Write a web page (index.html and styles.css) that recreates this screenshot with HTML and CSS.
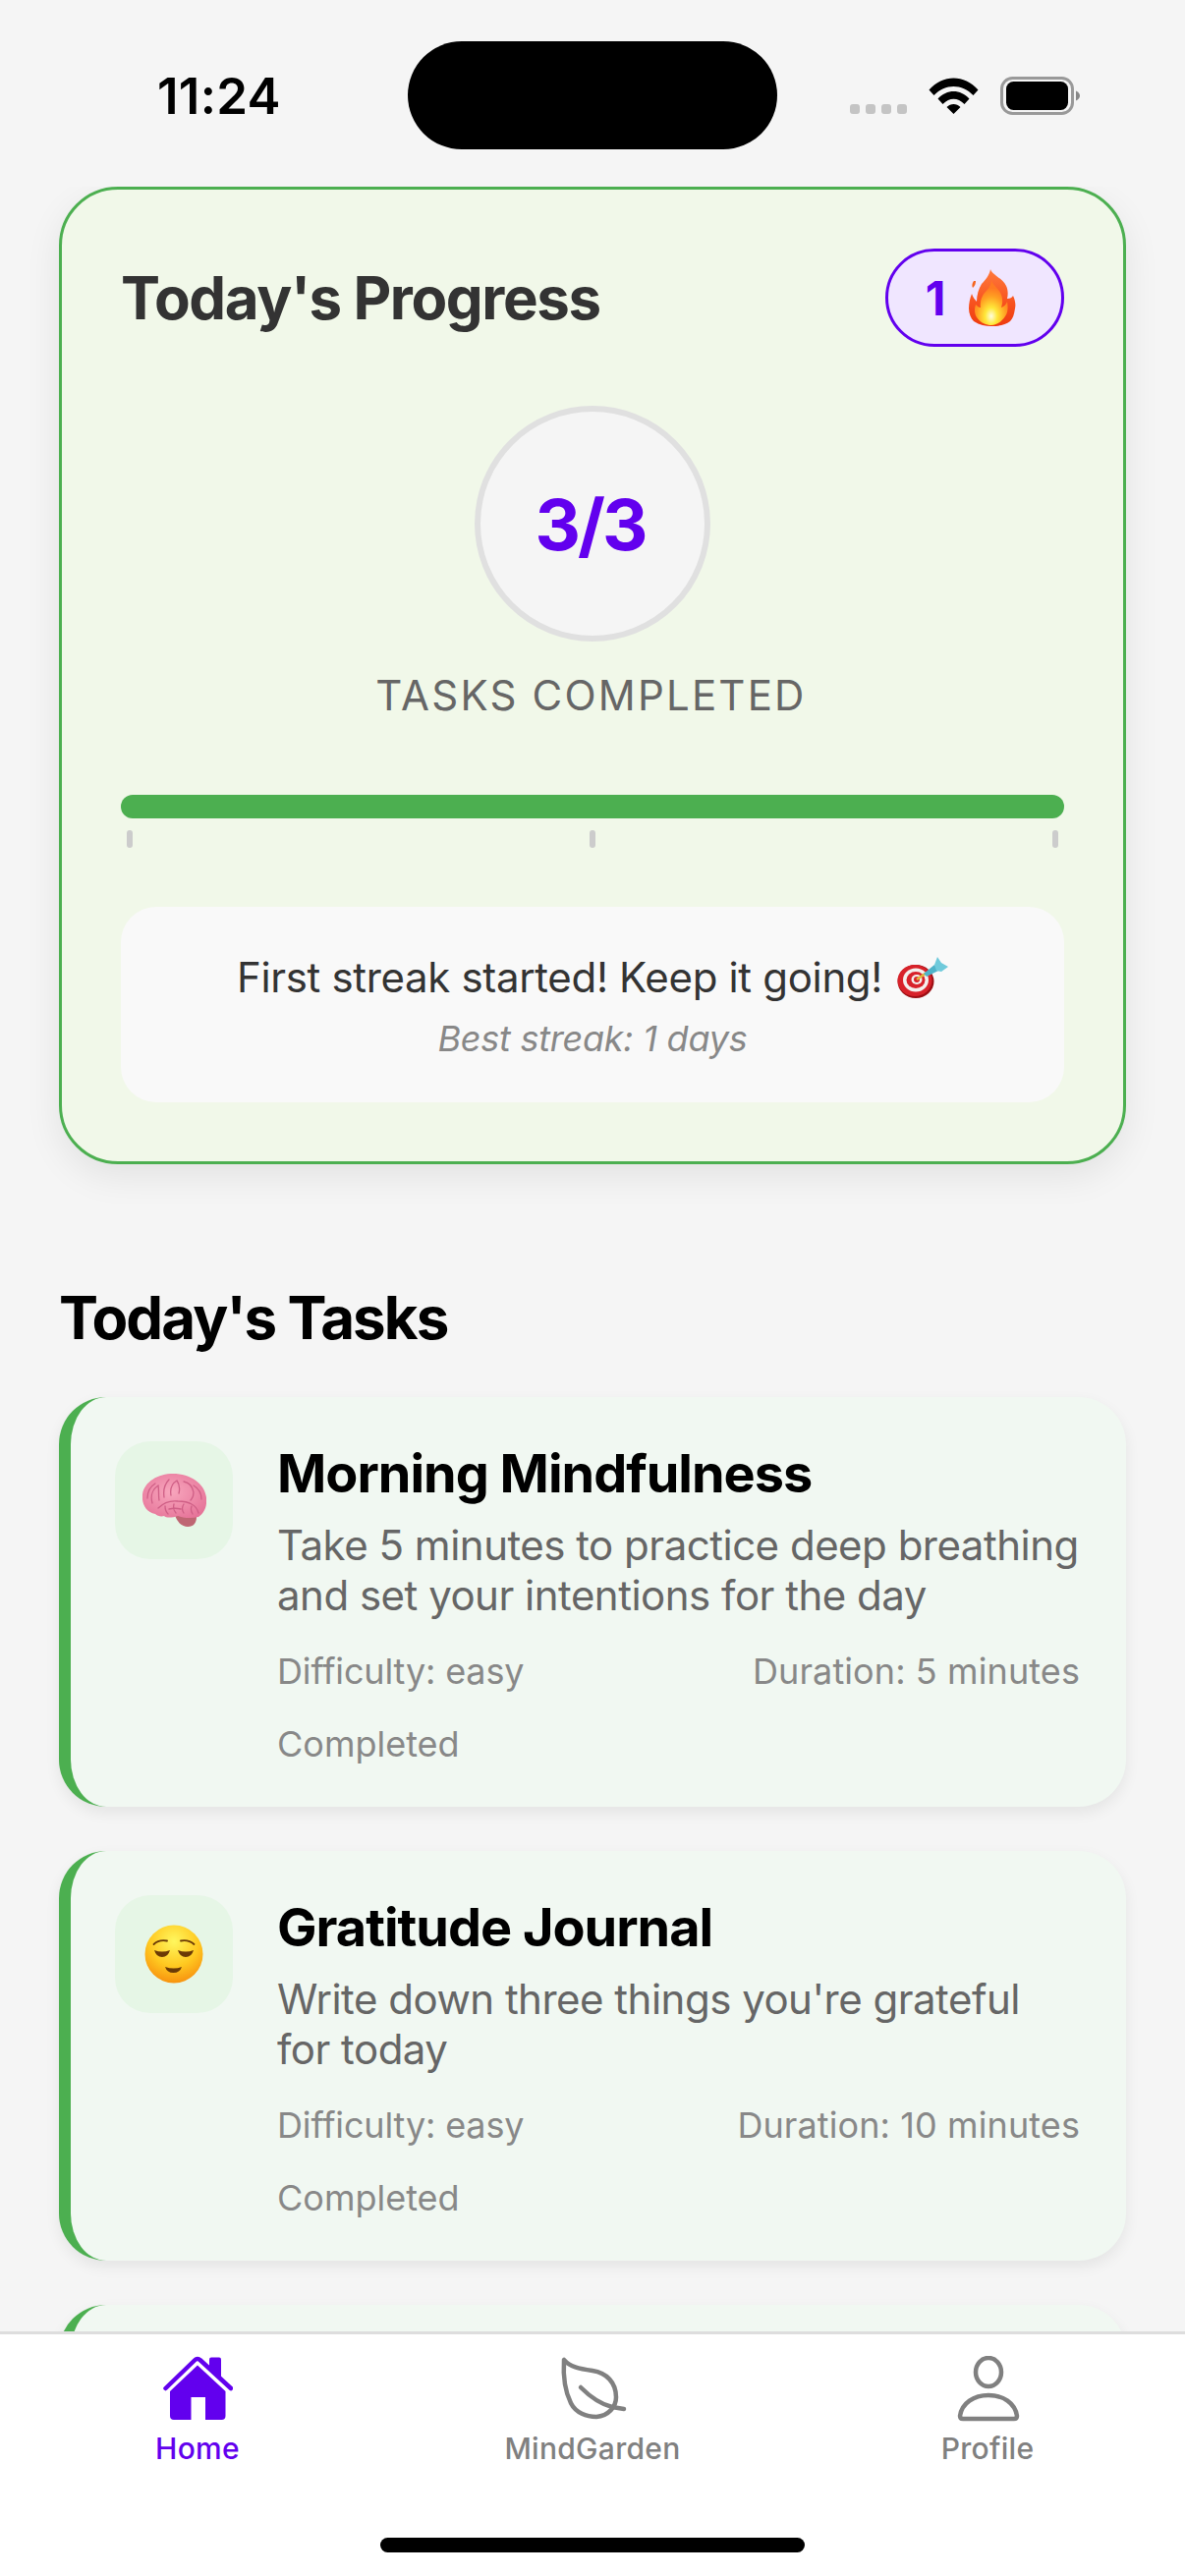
FILE: index.html
```html
<!DOCTYPE html>
<html lang="en">
<head>
<meta charset="utf-8">
<title>Home</title>
<link rel="stylesheet" href="styles.css">
</head>
<body>
<svg class="defs" width="0" height="0" aria-hidden="true">
  <defs>
    <radialGradient id="fireCore" cx="0.5" cy="0.8" r="0.62">
      <stop offset="0" stop-color="#fffde0"/>
      <stop offset="0.3" stop-color="#ffe83a"/>
      <stop offset="0.7" stop-color="#ffa022"/>
      <stop offset="1" stop-color="#ff7a22"/>
    </radialGradient>
    <linearGradient id="fireOuter" x1="0" y1="0" x2="0" y2="1">
      <stop offset="0" stop-color="#ff7a3c"/>
      <stop offset="0.6" stop-color="#f7521e"/>
      <stop offset="1" stop-color="#ee3a10"/>
    </linearGradient>
    <radialGradient id="faceGrad" cx="0.5" cy="0.28" r="0.78">
      <stop offset="0" stop-color="#fff75e"/>
      <stop offset="0.55" stop-color="#ffc820"/>
      <stop offset="0.92" stop-color="#f8930f"/>
      <stop offset="1" stop-color="#d9800f"/>
    </radialGradient>
    <radialGradient id="brainGrad" cx="0.45" cy="0.42" r="0.72">
      <stop offset="0" stop-color="#f8a6bd"/>
      <stop offset="1" stop-color="#e46f95"/>
    </radialGradient>
    <symbol id="face" viewBox="0 0 60 60">
      <circle cx="30" cy="30" r="29.500" fill="url(#faceGrad)"/>
      <path d="M9.500 20q5-5 13.500-3.500M37 16.500q8-1.500 13.500 3.500" fill="none" stroke="#6b3a06" stroke-width="1.800" stroke-linecap="round"/>
      <path d="M10 26q8 3 16 0q-2 7-8 7t-8-7zM34 26q8 3 16 0q-2 7-8 7t-8-7z" fill="#6b3a06"/>
      <path d="M21 43q9 3 17 0q-2 6-8.500 6T21 43z" fill="#6b3a06"/>
    </symbol>
  </defs>
</svg>
<div class="app">
  <header class="status">
    <span class="clock">11:24</span>
    <div class="island"></div>
    <div class="status-icons">
      <div class="dots"><i></i><i></i><i></i><i></i></div>
      <svg class="wifi" viewBox="0 0 50 37" width="51" height="37"><path d="M0 12.500C14-3.500 36-3.500 50 12.500L45 18C33.500 6 16.500 6 5 18z M9 21.500C18 11.500 32 11.500 41 21.500L36 27C29 20 21 20 14 27z M18 30C22 26 28 26 32 30L25 37z" fill="#000"/></svg>
      <svg class="battery" viewBox="0 0 82 39" width="82" height="39"><rect x="1.500" y="1.500" width="72" height="36" rx="11" fill="none" stroke="#999" stroke-width="3"/><rect x="6" y="5" width="63" height="29" rx="7.500" fill="#000"/><path d="M77 14.500q4 2 4 5t-4 5z" fill="#888"/></svg>
    </div>
  </header>

  <main class="scroll">
    <section class="progress-card">
      <div class="progress-head">
        <h2 class="progress-title">Today's Progress</h2>
        <div class="streak"><span>1</span>
          <svg class="fire" viewBox="0 0 48 58" width="48" height="58"><path d="M22 0c2 6 12 9 16 17 2 4 2 9 1 13 3 0 5-1 6-3 2 4 3 9 2 13-1 6-2 10-5 13-5 4-13 5-19 5s-12-1-18-5C2 50 0 45 0 40c0-5 1-10 3-15 1 3 3 6 5 8 0-7 2-13 5-18 4-4 8-9 9-15z" fill="url(#fireOuter)"/><path d="M5 12c-2 3-2 5-1 7 2-2 3-4 3-7z" fill="#f5651f"/><path d="M23 11c1 5 8 9 10 15 2 6 1 10 0 13 3-1 5-3 6-6 1 5 1 11-2 15-4 6-9 9-14 9s-11-2-15-8c-3-5-2-10-1-13 2 2 3 3 5 3-1-6 1-11 4-15 4-4 7-8 7-13z" fill="url(#fireCore)"/></svg>
        </div>
      </div>
      <div class="counter"><div class="ring">3/3</div></div>
      <p class="counter-label">TASKS COMPLETED</p>
      <div class="bar"><div class="bar-fill"></div></div>
      <div class="ticks"><i></i><i></i><i></i></div>
      <div class="message">
        <p class="message-main">First streak started! Keep it going!
          <svg class="dart" viewBox="0 0 52 42" width="52" height="42"><ellipse cx="19" cy="25" rx="18.500" ry="17" fill="#9c0f14"/><ellipse cx="18" cy="24" rx="17.500" ry="16" fill="#d8222a"/><ellipse cx="19" cy="23.500" rx="13" ry="12" fill="#f4f1ee"/><ellipse cx="19" cy="23.500" rx="9.500" ry="8.500" fill="#d8222a"/><ellipse cx="20" cy="23" rx="5.500" ry="5" fill="#f4f1ee"/><circle cx="20" cy="23" r="3" fill="#d8222a"/><path d="M20 23L30 16" stroke="#e0b83a" stroke-width="2.500"/><path d="M27 17L38 8l4 6-12 6z" fill="#4fb3c9"/><path d="M38 8l3-8 4 6 7 4-7 5-5-1z" fill="#6fcadb"/></svg>
        </p>
        <p class="message-sub">Best streak: 1 days</p>
      </div>
    </section>

    <h2 class="section-title">Today's Tasks</h2>

    <article class="task">
      <div class="task-icon">
        <svg class="brain" viewBox="0 0 65 54" width="65" height="54"><path d="M33 42c2 7 7 12 13 12 6 0 9-4 9-10z" fill="#bf6673"/><path d="M13 41C3 39-1 30 0 21 2 8 16 0 31 0c18 0 32 10 34 24 1 9-2 16-8 20-8 2-16 1-21-1-6 2-12 2-14 0-3 1-7 0-9-2z" fill="url(#brainGrad)"/><path d="M5 25c0-7 3-12 8-15M10 30c-2-7 0-14 6-18 1 5 0 10 1 15M22 24c-1-7 0-13 5-18M29 22c-1-6 1-12 6-15 3 4 3 9 2 13M42 8c5 1 9 5 10 11 0 3-1 6-3 8M52 12c5 3 8 8 8 14M16 35c5-5 12-8 20-7 5 0 9 0 14 3 4 2 6 5 7 9M23 33c0 3 1 6 3 8M32 31c-1 4 0 7 2 9M42 31c-2 3-2 6 0 9M50 33c-1 3-1 5 1 8M27 36c4-1 8-1 12 0" fill="none" stroke="#cf5f86" stroke-width="1.300" stroke-linecap="round"/></svg>
      </div>
      <div class="task-body">
        <h3 class="task-title">Morning Mindfulness</h3>
        <p class="task-desc">Take 5 minutes to practice deep breathing and set your intentions for the day</p>
        <div class="task-meta"><span>Difficulty: easy</span><span>Duration: 5 minutes</span></div>
        <p class="task-state">Completed</p>
      </div>
    </article>

    <article class="task">
      <div class="task-icon">
        <svg class="face" width="60" height="60"><use href="#face"/></svg>
      </div>
      <div class="task-body">
        <h3 class="task-title">Gratitude Journal</h3>
        <p class="task-desc">Write down three things you're grateful for today</p>
        <div class="task-meta"><span>Difficulty: easy</span><span>Duration: 10 minutes</span></div>
        <p class="task-state">Completed</p>
      </div>
    </article>

    <article class="task"></article>
  </main>

  <nav class="tabbar">
    <div class="tab tab-active">
      <svg viewBox="0 0 72 68" width="72" height="68"><path d="M3.500 33L33.500 4a3.500 3.500 0 0 1 5 0L70 33" fill="none" stroke="#6200ee" stroke-width="4.500" stroke-linecap="round" stroke-linejoin="round"/><path d="M48 13V3.500a2 2 0 0 1 2-2h8a2 2 0 0 1 2 2V24z" fill="#6200ee"/><path d="M36 9.500L64.500 36V61a4 4 0 0 1-4 4H44V42H29.500V65H12a4 4 0 0 1-4-4V36z" fill="#6200ee"/></svg>
      <span>Home</span>
    </div>
    <div class="tab">
      <svg viewBox="0 0 72 68" width="72" height="68"><path d="M7 4C6 20 8 36 14 48C19 58 30 62 40 62C52 61 60 52 60 42C60 27 50 17 36 15C22 13 13 11 7 4z" fill="none" stroke="#808080" stroke-width="4.500" stroke-linejoin="round"/><path d="M24 32c9 9 20 17 32 20l12 2" fill="none" stroke="#808080" stroke-width="4.500" stroke-linecap="round"/></svg>
      <span>MindGarden</span>
    </div>
    <div class="tab">
      <svg viewBox="0 0 72 68" width="72" height="68"><ellipse cx="37" cy="16.500" rx="13" ry="14.500" fill="none" stroke="#808080" stroke-width="4.500"/><path d="M11 64c-2 0-3-1-3-3 2-13 14-21 29-21s27 8 29 21c0 2-1 3-3 3z" fill="none" stroke="#808080" stroke-width="4.500" stroke-linejoin="round"/></svg>
      <span>Profile</span>
    </div>
    <div class="home-bar"></div>
  </nav>
</div>
</body>
</html>
```

FILE: styles.css
```css
* { box-sizing: border-box; }
html, body { margin: 0; padding: 0; }
body { font-family: Inter, "Noto Sans", sans-serif; background: #f5f5f5; }
p, h2, h3 { margin: 0; }
.defs { position: absolute; }

.app { width: 1206px; height: 2622px; display: flex; flex-direction: column; overflow: hidden; background: #f5f5f5; }

.status { flex: none; height: 190px; position: relative; }
.clock { position: absolute; left: 160px; top: 67px; font-size: 51px; line-height: 62px; font-weight: 600; letter-spacing: 0.3px; color: #000; }
.island { position: absolute; left: 415px; top: 42px; width: 376px; height: 110px; border-radius: 55px; background: #000; }
.status-icons { position: absolute; left: 865px; top: 78px; display: flex; align-items: flex-end; }
.dots { display: flex; gap: 6px; margin-bottom: 1px; }
.dots i { width: 10px; height: 10px; border-radius: 3px; background: #c4c4c4; }
.wifi { margin-left: 22px; margin-bottom: 1px; }
.battery { margin-left: 22px; }

.scroll { flex: 1; min-height: 0; overflow: hidden; padding: 0 60px; }

.progress-card { height: 995px; border: 3px solid #4caf50; border-radius: 60px; background: #f1f8e9; padding: 60px; box-shadow: 0 12px 36px rgba(0, 0, 0, 0.08); }
.progress-head { display: flex; justify-content: space-between; align-items: center; height: 100px; }
.progress-title { font-size: 60px; line-height: 72px; font-weight: 700; letter-spacing: -1.4px; color: #333; }
.streak { width: 182px; height: 100px; border: 3px solid #6200ee; border-radius: 50px; background: #f0e6ff; display: flex; align-items: center; justify-content: center; gap: 24px; padding-right: 8px; font-size: 48px; font-weight: 700; color: #6200ee; }

.counter { display: flex; justify-content: center; margin-top: 60px; }
.ring { width: 240px; height: 240px; border: 6px solid #e0e0e0; border-radius: 50%; background: #f5f5f5; display: flex; align-items: center; justify-content: center; padding-right: 5px; font-size: 72px; font-weight: 700; letter-spacing: -3px; color: #6200ee; }
.counter-label { margin-top: 28px; padding-right: 3px; text-align: center; font-size: 42px; line-height: 54px; letter-spacing: 2.2px; color: #666; }

.bar { margin-top: 74px; height: 24px; border-radius: 12px; background: #4caf50; overflow: hidden; }
.bar-fill { height: 100%; background: #4caf50; }
.ticks { display: flex; justify-content: space-between; margin-top: 12px; padding: 0 6px; }
.ticks i { width: 6px; height: 18px; border-radius: 3px; background: #ccc; }

.message { margin-top: 60px; height: 199px; border-radius: 36px; background: #f9f9f9; display: flex; flex-direction: column; align-items: center; padding-top: 45px; }
.message-main { display: flex; align-items: center; gap: 15px; font-size: 42px; line-height: 54px; letter-spacing: -0.33px; color: #333; }
.message-sub { margin-top: 12px; font-size: 36px; line-height: 46px; font-style: italic; letter-spacing: -0.25px; color: #888; }

.section-title { margin-top: 120px; font-size: 60px; line-height: 72px; font-weight: 700; letter-spacing: -1.9px; color: #000; }

.task { margin-top: 45px; height: 417px; display: flex; gap: 45px; padding: 45px 45px 0 45px; border-left: 12px solid #4caf50; border-radius: 48px; background: #f1f8f2; box-shadow: 0 6px 15px rgba(0, 0, 0, 0.07); }
.task-icon { flex: none; width: 120px; height: 120px; border-radius: 36px; background: #e6f6e6; display: flex; align-items: center; justify-content: center; }
.task-body { flex: 1; min-width: 0; }
.task-title { font-size: 54px; line-height: 66px; font-weight: 700; letter-spacing: -1px; color: #000; }
.task-desc { margin-top: 14px; font-size: 42px; line-height: 51px; letter-spacing: -0.5px; color: #666; }
.task-meta { display: flex; justify-content: space-between; margin: 30px 2px 0 0; font-size: 36px; line-height: 44px; color: #888; }
.task-meta span:first-child { letter-spacing: -0.15px; }
.task-meta span:last-child { letter-spacing: 0.1px; }
.task-state { margin-top: 30px; font-size: 36px; line-height: 44px; color: #888; }

.tabbar { flex: none; height: 249px; position: relative; display: flex; justify-content: space-between; padding: 22px 0 0; background: #fff; border-top: 3px solid #ddd; }
.tab { width: 402px; display: flex; flex-direction: column; align-items: center; font-size: 30px; line-height: 40px; font-weight: 500; letter-spacing: 0.3px; color: #808080; }
.tab span { margin-top: 6px; }
.tab-active { color: #6200ee; }
.home-bar { position: absolute; left: 387px; top: 207px; width: 432px; height: 15px; border-radius: 8px; background: #000; }
```
